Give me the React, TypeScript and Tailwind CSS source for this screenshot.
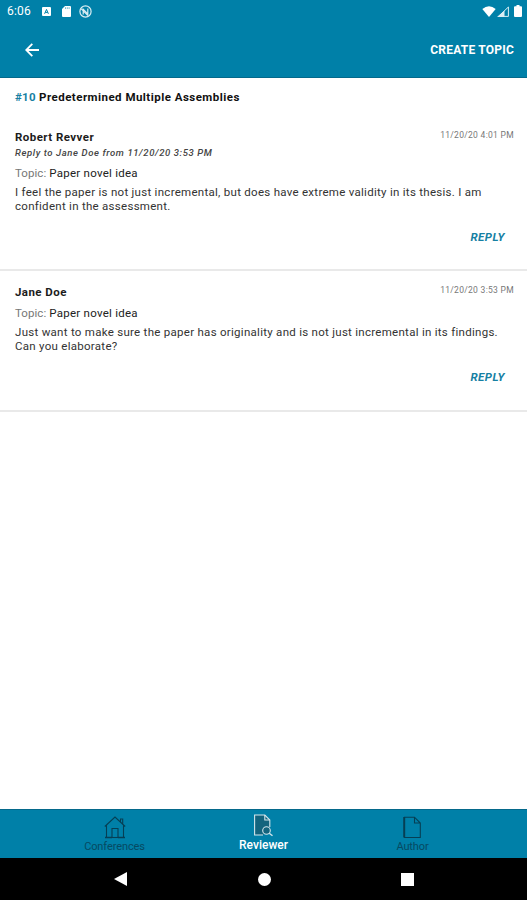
import type { ReactNode } from 'react'

type Message = {
  author: string
  date: string
  replyTo?: string
  topic: string
  lines: string[]
}

const messages: Message[] = [
  {
    author: 'Robert Revver',
    date: '11/20/20 4:01 PM',
    replyTo: 'Reply to Jane Doe from 11/20/20 3:53 PM',
    topic: 'Paper novel idea',
    lines: [
      'I feel the paper is not just incremental, but does have extreme validity in its thesis. I am',
      'confident in the assessment.',
    ],
  },
  {
    author: 'Jane Doe',
    date: '11/20/20 3:53 PM',
    topic: 'Paper novel idea',
    lines: [
      'Just want to make sure the paper has originality and is not just incremental in its findings.',
      'Can you elaborate?',
    ],
  },
]

function StatusBar() {
  return (
    <div className="flex h-[22px] items-center justify-between pl-[7px] pr-[5px] text-white">
      <div className="flex items-center">
        <span className="w-[35px] text-[12px] leading-[22px] tracking-[0.2px]">6:06</span>
        <svg width="9" height="9" viewBox="0 0 9 9" className="mr-[11px]">
          <rect width="9" height="9" rx="1" fill="#fff" />
          <path d="M2.6 6.8 4.5 2.4 6.4 6.8M3.3 5.4h2.4" fill="none" stroke="#0080a8" strokeWidth="1" />
        </svg>
        <svg width="9" height="11" viewBox="0 0 9 11" className="mr-[8px]">
          <path d="M3 0h5q1 0 1 1v9q0 1-1 1H1q-1 0-1-1V3z" fill="#fff" />
          <path d="M3.5 1.3v1.6M5.3 1.3v1.6M7.1 1.3v1.6" stroke="#0080a8" strokeWidth=".6" />
        </svg>
        <svg width="13" height="13" viewBox="0 0 13 13" fill="none" stroke="#d9edf3" strokeWidth="1.2">
          <circle cx="6.5" cy="6.5" r="5.6" />
          <path d="M4.2 9.5V4.2l4.6 4.6V3.5M2.2 3.8l6.8 6.8" />
        </svg>
      </div>
      <div className="flex items-center">
        <svg width="14" height="11" viewBox="0 0 14 11" className="mr-px">
          <path d="M.3 3Q7-2.3 13.7 3L7 11z" fill="#fff" />
        </svg>
        <svg width="12" height="11" viewBox="0 0 12 11" className="mr-[5px]">
          <path d="M11.4 1v9.4H1.5z" fill="none" stroke="#d9edf3" />
          <path d="M7.5 4.5V11H0z" fill="#d9edf3" />
        </svg>
        <svg width="8" height="12" viewBox="0 0 8 12">
          <path d="M2.5 0h3v1.2H7q1 0 1 1V11q0 1-1 1H1q-1 0-1-1V2.2q0-1 1-1h1.5z" fill="#fff" />
        </svg>
      </div>
    </div>
  )
}

function MessageRow({ message, className }: { message: Message; className: string }) {
  return (
    <article className={`flex flex-col border-b-2 border-[#e9e9e9] pl-[15px] pr-[13px] ${className}`}>
      <div className="flex items-start justify-between">
        <h2 className="text-[11.5px] font-bold leading-[14px] tracking-[0.45px] text-[#1c1c1c]">{message.author}</h2>
        <time className="text-[8.5px] leading-[10px] tracking-[0.3px] text-[#777]">{message.date}</time>
      </div>
      {message.replyTo && (
        <p className="mt-[3px] text-[9.5px] font-medium italic leading-[12px] tracking-[0.6px] text-[#444]">{message.replyTo}</p>
      )}
      <p className="mt-[7px] text-[11.5px] leading-[14px] tracking-[0.25px] text-[#222]">
        <span className="tracking-[0.05px] text-[#777]">Topic:</span> {message.topic}
      </p>
      <p className="mt-[5px] whitespace-nowrap text-[11.5px] leading-[14px] tracking-[0.28px] text-[#333]">
        {message.lines[0]}
        <br />
        {message.lines[1]}
      </p>
      <button className="mr-[9px] mt-[17px] self-end text-[11.5px] font-bold italic leading-[14px] tracking-[0.5px] text-[#1680a3]">
        REPLY
      </button>
    </article>
  )
}

function Tab({ label, active, children }: { label: string; active?: boolean; children: ReactNode }) {
  return (
    <div className={`flex w-[149px] flex-col items-center ${active ? 'pt-[4px] text-white' : 'pt-[6px] text-[#064a62]'}`}>
      {children}
      <span className={`leading-[14px] ${active ? 'text-[12px] font-medium' : 'mt-px text-[11px] tracking-[-0.1px]'}`}>
        {label}
      </span>
    </div>
  )
}

export default function App() {
  return (
    <div className="flex h-[900px] w-[527px] flex-col overflow-hidden bg-white font-['Roboto',sans-serif]">
      <header className="h-[78px] border-b border-[#04698b] bg-[#0080a8]">
        <StatusBar />
        <div className="flex h-[55px] items-center justify-between pl-[25px] pr-[13px] text-white">
          <svg width="14" height="14" viewBox="0 0 14 14" fill="none" stroke="currentColor" strokeWidth="1.8">
            <path d="M14 7H1.5M7.3.8 1.2 7l6.1 6.2" />
          </svg>
          <button className="text-[12px] font-bold tracking-[0.22px]">CREATE TOPIC</button>
        </div>
      </header>

      <main className="flex-1">
        <h1 className="mt-[12px] pl-[15px] text-[11.5px] font-bold leading-[14px] tracking-[0.47px] text-[#111]">
          <span className="tracking-[0.25px] text-[#1680a3]">#10</span> Predetermined Multiple Assemblies
        </h1>
        <MessageRow message={messages[0]} className="mt-[26px] h-[141px]" />
        <MessageRow message={messages[1]} className="h-[141px] pt-[14px]" />
      </main>

      <nav className="flex h-[49px] justify-center border-t border-[#04698b] bg-[#0080a8]">
        <Tab label="Conferences">
          <svg width="22" height="23" viewBox="0 0 22 23" fill="none" stroke="#063f54" strokeWidth="1.1">
            <path d="M.8 10.5 11 1l10.2 9.5M16.5 6V3h2.2v5M2.5 9.3V21.5M19.5 9.3V21.5M8 21.5v-9h6v9" />
            <path d="M1 21.5h7M14 21.5h7" strokeWidth="1.6" />
            <path d="M8 21.5h6" />
          </svg>
        </Tab>
        <Tab label="Reviewer" active>
          <svg width="20" height="24" viewBox="0 0 20 24" fill="none" stroke="#d3e5eb" strokeWidth="1.1">
            <path d="M9 21H.6V1h10.2l5 5v7" fill="#13647e" />
            <path d="M10.8 1v5h5" />
            <circle cx="12.5" cy="16.5" r="3.8" fill="#13647e" />
            <path d="m15.2 19.2 3.3 2.6" strokeWidth="1.4" />
          </svg>
        </Tab>
        <Tab label="Author">
          <svg width="20" height="23" viewBox="0 0 20 23" fill="none" stroke="#063f54" strokeWidth="1.1">
            <path d="M1.2 1v20.5" strokeWidth="2" />
            <path d="M1 1.2h10.5l5.8 5.8v14.5H1M11.5 1.2V7h5.8" />
          </svg>
        </Tab>
      </nav>

      <div className="flex h-[42px] items-center justify-center bg-black pl-px">
        <div className="flex w-[143px] justify-center">
          <svg width="14" height="14" viewBox="0 0 14 14">
            <path d="M0 7 13 0v14z" fill="#fff" />
          </svg>
        </div>
        <div className="flex w-[143px] justify-center">
          <span className="size-[13px] rounded-full bg-white" />
        </div>
        <div className="flex w-[143px] justify-center">
          <span className="size-[13px] bg-white" />
        </div>
      </div>
    </div>
  )
}
